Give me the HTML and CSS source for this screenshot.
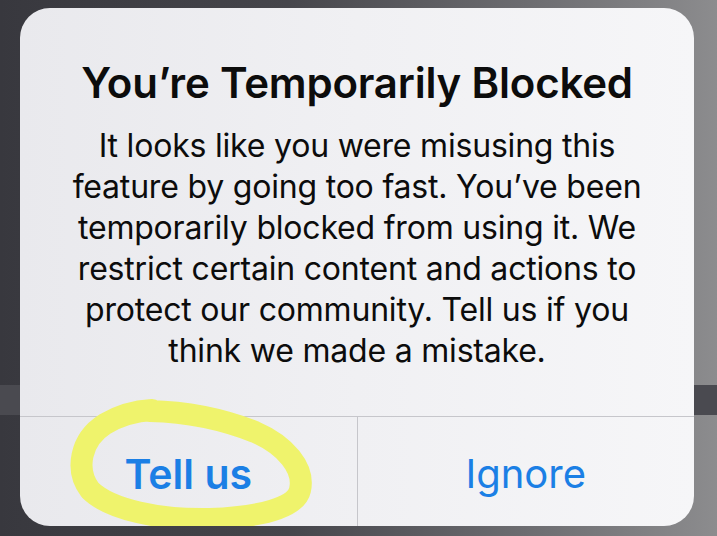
FILE: index.html
```html
<!DOCTYPE html>
<html lang="en">
<head>
  <meta charset="UTF-8" />
  <title>Temporarily Blocked</title>
  <link rel="stylesheet" href="styles.css">
</head>
<body>
  <div class="screen">
    <div class="alert">
      <div class="alert-body">
        <div class="title">You’re Temporarily Blocked</div>
        <p class="message">It looks like you were misusing this<br>feature by going too fast. You’ve been<br>temporarily blocked from using it. We<br>restrict certain content and actions to<br>protect our community. Tell us if you<br>think we made a mistake.</p>
      </div>
      <div class="actions">
        <button class="action primary">Tell us</button>
        <button class="action">Ignore</button>
      </div>

      <svg class="scribble" width="280" height="154" viewBox="0 0 280 154">
        <path d="M90 21 C 130 22, 165 30, 195 42 C 225 55, 245 78, 240 100 C 236 118, 200 127, 150 129 C 100 130, 50 120, 30 100 C 15 80, 20 50, 45 34 C 60 25, 75 21, 92 20"
              fill="none" stroke="#eff36c" stroke-width="22" stroke-linecap="round" stroke-linejoin="round"/>
      </svg>
    </div>
  </div>
</body>
</html>
```

FILE: styles.css
```css
body {
  margin: 0;
  background:
    linear-gradient(180deg, transparent 385px, #4a4a50 385px, #4a4a50 415px, transparent 415px),
    linear-gradient(90deg, #38383e 0%, #45454b 40%, #6e6e72 75%, #8c8c8e 100%);
  font-family: Inter, "Noto Sans", Arial, sans-serif;
  height: 536px;
  overflow: hidden;
}

.screen {
  padding: 8px 23px 0 20px;
}

.alert {
  position: relative;
  width: 674px;
  height: 518px;
  border-radius: 30px;
  background: linear-gradient(90deg, #e9e9ed 0%, #f0f0f3 50%, #f6f6f8 100%);
  display: flex;
  flex-direction: column;
  overflow: hidden;
}

.alert-body {
  flex: 1;
  padding: 51px 10px 0;
  text-align: center;
  color: #0c0c0c;
}

.title {
  font-size: 42px;
  font-weight: 600;
  line-height: 48px;
  letter-spacing: -0.2px;
  white-space: nowrap;
}

.message {
  margin: 18px 0 0;
  font-size: 32px;
  line-height: 41px;
  letter-spacing: -0.2px;
  white-space: nowrap;
}

.actions {
  height: 109px;
  display: flex;
  border-top: 1px solid #c6c6cb;
}

.action {
  flex: 1;
  border: none;
  background: transparent;
  font-family: inherit;
  font-size: 40px;
  color: #1b7fe5;
  padding: 4px 0 0;
}

.action + .action {
  border-left: 1px solid #c6c6cb;
}

.action.primary {
  font-size: 41px;
  font-weight: 600;
}

.scribble {
  position: absolute;
  left: 40px;
  top: 382px;
}
```
